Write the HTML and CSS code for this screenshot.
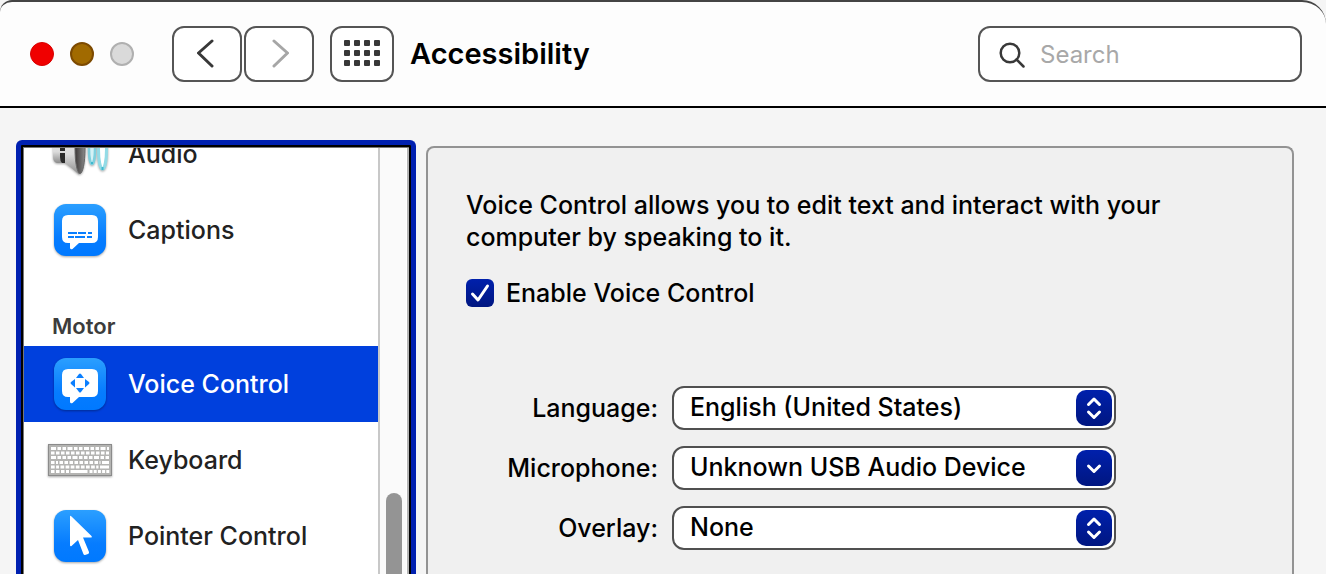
FILE: index.html
```html
<!DOCTYPE html>
<html lang="en">
<head>
    <meta charset="UTF-8">
    <meta name="viewport" content="width=device-width, initial-scale=1.0">
    <title>Accessibility</title>
    <link rel="stylesheet" href="styles.css">
</head>
<body>
    <div class="window">
        <header class="toolbar">
            <div class="lights">
                <button class="light close" aria-label="Close"></button>
                <button class="light minimize" aria-label="Minimize"></button>
                <button class="light zoom" aria-label="Zoom" disabled></button>
            </div>
            <nav class="nav-buttons">
                <button class="tool-button" aria-label="Back">
                    <svg width="20" height="30" viewBox="0 0 20 30"><path d="M15 2 1.500 14 15 27" /></svg>
                </button>
                <button class="tool-button forward" aria-label="Forward" disabled>
                    <svg width="20" height="30" viewBox="0 0 20 30"><path d="M5 2 18.500 14 5 27" /></svg>
                </button>
            </nav>
            <button class="tool-button show-all" aria-label="Show All">
                <svg width="36" height="28" viewBox="0 0 36 28">
                    <g id="dots">
                        <rect x="0" y="0" width="6" height="6" rx="1" />
                        <rect x="10" y="0" width="6" height="6" rx="1" />
                        <rect x="20" y="0" width="6" height="6" rx="1" />
                        <rect x="30" y="0" width="6" height="6" rx="1" />
                    </g>
                    <use href="#dots" y="10" />
                    <use href="#dots" y="20" />
                </svg>
            </button>
            <h1>Accessibility</h1>
            <label class="search">
                <svg width="28" height="28" viewBox="0 0 28 28"><circle cx="12" cy="12" r="9.3" /><path d="M18.500 18.500 25.500 25.500" /></svg>
                <input type="search" placeholder="Search" aria-label="Search">
            </label>
        </header>

        <main class="content">
            <aside class="sidebar">
                <ul class="list">
                    <li>
                        <a href="#" class="item">
                            <svg class="icon" width="64" height="64" viewBox="0 0 64 64">
                                <defs>
                                    <linearGradient id="cone" x1="0" y1="0" x2="0" y2="1">
                                        <stop offset="0" stop-color="#f4f4f4" />
                                        <stop offset="0.6" stop-color="#dcdcdc" />
                                        <stop offset="1" stop-color="#8c8c8c" />
                                    </linearGradient>
                                    <linearGradient id="mouth" x1="0" y1="0" x2="1" y2="0">
                                        <stop offset="0" stop-color="#3c3838" />
                                        <stop offset="1" stop-color="#8a8a8a" />
                                    </linearGradient>
                                </defs>
                                <path d="M8 13h9v28H9q-4-1-4-6V19q0-5 3-6z" fill="url(#cone)" />
                                <path d="M12 13h5v16h-5zM12 31h5v10h-3q-2-2-2-6z" fill="#2a2a2a" />
                                <path d="M17 13 31 2q5 8 5 25 0 18-5 25.500Q24 46 17 41z" fill="url(#cone)" />
                                <ellipse cx="32" cy="27" rx="5" ry="24.500" fill="url(#mouth)" stroke="#666" />
                                <ellipse cx="44" cy="27" rx="3" ry="15" fill="#d5f2f6" stroke="#7fd0de" stroke-width="2.500" />
                                <ellipse cx="54.500" cy="27" rx="4" ry="20" fill="#fff" stroke="#93dbe6" stroke-width="3" />
                                <path d="M44 40v2M54.500 45v3" stroke="#3fb8ce" stroke-width="2" />
                            </svg>
                            Audio
                        </a>
                    </li>
                    <li>
                        <a href="#" class="item">
                            <svg class="icon" width="64" height="64" viewBox="0 0 64 64">
                                <defs>
                                    <linearGradient id="blue" x1="0" y1="0" x2="0" y2="1">
                                        <stop offset="0" stop-color="#2b9fff" />
                                        <stop offset="0.65" stop-color="#067cff" />
                                        <stop offset="1" stop-color="#0079ff" />
                                    </linearGradient>
                                </defs>
                                <rect x="6" y="6" width="52" height="52" rx="12" fill="url(#blue)" />
                                <path d="M20 17h24q6 0 6 6v16q0 6-6 6H31l-6.500 6q-2 1-2.500-1v-5h-2q-6 0-6-6V23q0-6 6-6z" fill="#fff" />
                                <path d="M20 35h9M30 35h8M40 35h4M20 39h6M27 39h10M39 39h5" stroke="#0a7fff" stroke-width="2" />
                            </svg>
                            Captions
                        </a>
                    </li>
                    <li class="heading">Motor</li>
                    <li>
                        <a href="#" class="item selected" aria-current="page">
                            <svg class="icon" width="64" height="64" viewBox="0 0 64 64">
                                <rect x="6" y="6" width="52" height="52" rx="12" fill="url(#blue)" />
                                <path d="M20 17h24q6 0 6 6v16q0 6-6 6H31l-6.500 6q-2 1-2.500-1v-5h-2q-6 0-6-6V23q0-6 6-6z" fill="#fff" />
                                <path d="M28 26 31 22q1-1 2 0L36 26zM28 36 31 40q1 1 2 0L36 36zM27 27 23 30q-1 1 0 2l4 3.500zM37 27 41 30q1 1 0 2l-4 3.500z" fill="#0a7fff" />
                            </svg>
                            Voice Control
                        </a>
                    </li>
                    <li>
                        <a href="#" class="item">
                            <svg class="icon" width="64" height="64" viewBox="0 0 64 64">
                                <rect x="0.500" y="16.500" width="63" height="31" fill="#b4b4b2" stroke="#8b8b8b" />
                                <g stroke="#fff" stroke-width="3">
                                    <path d="M3 20.500h58" stroke-dasharray="5 1.500 3.500 1.500 3.500 1.500" />
                                    <path d="M3 25h58" stroke-dasharray="3.500 1.500" />
                                    <path d="M3 29.500h58" stroke-dasharray="5 1.500 3.500 1.500 3.500 1.500 3.500 1.500" />
                                    <path d="M3 34.500h7M11.500 34.500h41M54 34.500h7" stroke-dasharray="3.500 1.500" />
                                    <path d="M3 39h8M12.500 39h38" stroke-dasharray="3.700 1.400" />
                                    <path d="M52 39h9" />
                                    <path d="M3 43.500h18" stroke-dasharray="3.500 1.500" />
                                    <path d="M22.500 43.500h17M54 34.500h7" />
                                    <path d="M41.500 43.500h20" stroke-dasharray="3 1.200" />
                                </g>
                            </svg>
                            Keyboard
                        </a>
                    </li>
                    <li>
                        <a href="#" class="item">
                            <svg class="icon" width="64" height="64" viewBox="0 0 64 64">
                                <rect x="6" y="6" width="52" height="52" rx="12" fill="url(#blue)" />
                                <path d="M22 13q0-2 1.500-.5L43.500 32q1 1.500-1 1.500H35L41 48q.4 1.300-1 2l-3 1q-1 .3-1.600-1L30 36l-6.500 6q-1.500.8-1.500-1z" fill="#fff" />
                            </svg>
                            Pointer Control
                        </a>
                    </li>
                </ul>
                <div class="scrollbar"><div class="thumb"></div></div>
            </aside>

            <section class="panel">
                <p>Voice Control allows you to edit text and interact with your computer by speaking to it.</p>
                <label class="enable">
                    <span class="check">
                        <input type="checkbox" checked>
                        <svg width="28" height="28" viewBox="0 0 28 28"><path d="M6.500 15 12 21 21.500 7" /></svg>
                    </span>
                    Enable Voice Control
                </label>

                <form class="options">
                    <label for="language">Language:</label>
                    <div class="popup">
                        <select id="language"><option>English (United States)</option></select>
                        <svg class="arrows" width="36" height="36" viewBox="0 0 36 36"><path d="M12.500 14.500 18 9l5.500 5.500M12.500 22 18 27.500 23.500 22" /></svg>
                    </div>
                    <label for="microphone">Microphone:</label>
                    <div class="popup">
                        <select id="microphone"><option>Unknown USB Audio Device</option></select>
                        <svg class="arrows" width="36" height="36" viewBox="0 0 36 36"><path d="M12.500 16 18 21.500 23.500 16" /></svg>
                    </div>
                    <label for="overlay">Overlay:</label>
                    <div class="popup">
                        <select id="overlay"><option>None</option></select>
                        <svg class="arrows" width="36" height="36" viewBox="0 0 36 36"><path d="M12.500 14.500 18 9l5.500 5.500M12.500 22 18 27.500 23.500 22" /></svg>
                    </div>
                </form>
            </section>
        </main>
    </div>
</body>
</html>
```

FILE: styles.css
```css
* {
    box-sizing: border-box;
}
body {
    margin: 0;
    background-color: #f5f5f5;
    color: #000;
    font-family: Inter, "Liberation Sans", sans-serif;
    font-size: 25px;
    font-weight: 500;
    line-height: 32px;
}
button, input, select {
    margin: 0;
    padding: 0;
    font: inherit;
    color: inherit;
}
.window {
    display: flex;
    flex-direction: column;
    height: 100vh;
    overflow: hidden;
}

/* Toolbar */
.toolbar {
    display: flex;
    align-items: center;
    flex-shrink: 0;
    padding: 24px 24px 24px 30px;
    border-top: 2px solid #444;
    border-bottom: 2px solid #000;
    border-radius: 12px 24px 0 0;
    background-color: #fdfdfd;
}
.lights {
    display: flex;
    gap: 16px;
    margin-right: 38px;
}
.light {
    width: 24px;
    height: 24px;
    border: 1px solid #d80000;
    border-radius: 50%;
    background-color: #f00000;
}
.minimize {
    border: 2px solid #7d4a00;
    background-color: #a16a00;
}
.zoom {
    border: 2px solid #b0b0b0;
    background-color: #dadada;
}
.nav-buttons {
    display: flex;
    gap: 2px;
    margin-right: 16px;
}
.tool-button {
    display: flex;
    align-items: center;
    justify-content: center;
    width: 70px;
    height: 56px;
    border: 2px solid #555;
    border-radius: 12px;
    background-color: #fff;
}
.tool-button path {
    fill: none;
    stroke: #383838;
    stroke-width: 3;
    stroke-linecap: round;
    stroke-linejoin: round;
}
.forward path {
    stroke: #a6a6a6;
}
.show-all {
    width: 64px;
    margin-right: 16px;
    fill: #383838;
}
h1 {
    margin: 0;
    font-size: 29px;
    font-weight: 600;
}
.search {
    display: flex;
    align-items: center;
    gap: 14px;
    width: 324px;
    height: 56px;
    margin-left: auto;
    padding: 2px 18px 0;
    border: 2px solid #555;
    border-radius: 12px;
    background-color: #fff;
    font-size: 24px;
    font-weight: 400;
}
.search svg {
    flex-shrink: 0;
    fill: none;
    stroke: #383838;
    stroke-width: 2.5;
    stroke-linecap: round;
}
.search input {
    width: 100%;
    border: 0;
    outline: 0;
    background: none;
}
.search input::placeholder {
    color: #a8a8a8;
}

.content {
    display: flex;
    flex: 1;
    gap: 10px;
    min-height: 0;
    padding: 32px 32px 0 16px;
}

/* Sidebar */
.sidebar {
    display: flex;
    flex-shrink: 0;
    width: 400px;
    border: 5px solid #0020b0;
    border-bottom: 0;
    border-radius: 6px 6px 0 0;
    background-color: #fff;
    box-shadow: inset 0 2px #000, inset 2px 0 #000, inset -2px 0 #000, inset 0 3px #777, inset 3px 0 #777, inset -4px 0 #b4b4b4;
    padding: 3px 5px 0 3px;
}
.list {
    display: flex;
    flex: 1;
    flex-direction: column;
    justify-content: flex-end;
    margin: 0;
    padding: 0;
    overflow: hidden;
    list-style: none;
}
.item {
    display: flex;
    align-items: center;
    gap: 16px;
    height: 76px;
    padding: 0 24px;
    color: #222;
    text-decoration: none;
}
.selected {
    background-color: #0040dd;
    color: #fff;
}
.icon {
    flex-shrink: 0;
    filter: drop-shadow(0 1px 1px rgba(0, 0, 0, 0.35));
}
.heading {
    padding: 42px 28px 4px;
    color: #3c3c3c;
    font-size: 22px;
    font-weight: 600;
}
.scrollbar {
    width: 28px;
    padding: 345px 4px 0 6px;
    border-left: 2px solid #c8c8c8;
    background-color: #fafafa;
}
.thumb {
    width: 16px;
    height: 100%;
    border-radius: 8px 8px 0 0;
    background-color: #949494;
}

/* Settings panel */
.panel {
    flex: 1;
    margin-top: 6px;
    padding: 41px 38px 0;
    border: 2px solid #939393;
    border-bottom: 0;
    border-radius: 8px 8px 0 0;
    background-color: #f0f0f0;
}
.panel p {
    max-width: 740px;
    margin: 0 0 24px;
}
.enable {
    display: flex;
    align-items: center;
    gap: 12px;
}
.check, .popup {
    display: grid;
    align-items: center;
}
.check > *, .popup > * {
    grid-area: 1 / 1;
}
.check input {
    width: 28px;
    height: 28px;
    appearance: none;
    border-radius: 6px;
}
.check input:checked, .arrows {
    background-image: linear-gradient(#0020ac, #001680);
}
.check svg, .arrows {
    fill: none;
    stroke: #fff;
    stroke-width: 3;
    stroke-linecap: round;
    stroke-linejoin: round;
    pointer-events: none;
}
.check input:not(:checked) + svg {
    visibility: hidden;
}
.options {
    display: grid;
    grid-template-columns: 192px minmax(0, 444px);
    gap: 16px 14px;
    align-items: center;
    margin-top: 77px;
}
.options label {
    text-align: right;
}
.popup select {
    width: 100%;
    height: 44px;
    padding: 0 44px 2px 16px;
    appearance: none;
    border: 2px solid #505050;
    border-radius: 12px;
    background-color: #fff;
}
.arrows {
    justify-self: end;
    margin-right: 4px;
    border-radius: 10px;
}
```
